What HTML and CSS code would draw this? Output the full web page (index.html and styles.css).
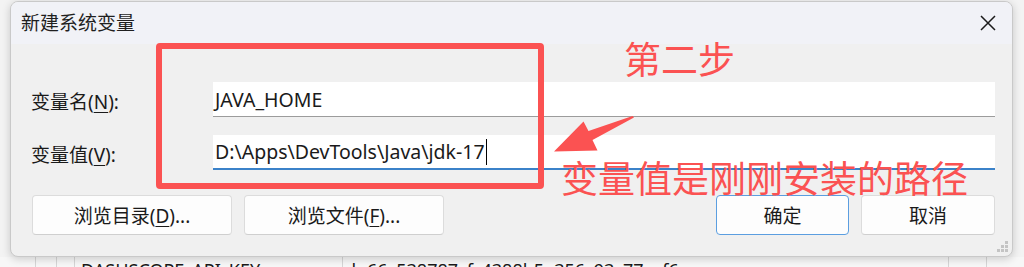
FILE: index.html
```html
<!DOCTYPE html>
<html lang="zh-CN">
<head>
  <meta charset="UTF-8" />
  <title>新建系统变量</title>
  <link rel="stylesheet" href="styles.css">
</head>
<body>

<!-- window behind the dialog -->
<div class="backdrop">
  <div class="bg-row">
    <span class="bg-cell first"></span>
    <span class="bg-cell narrow"></span>
    <span class="bg-cell narrow"></span>
    <span class="bg-cell name">DASHSCOPE_API_KEY</span>
    <span class="bg-cell value">sk-66c538787cfc4388b5e356c93c77acf6</span>
    <span class="bg-cell end"></span>
    <span class="bg-cell tail"></span>
  </div>
</div>

<div class="dialog">
  <div class="titlebar">
    <span class="title">新建系统变量</span>
    <svg class="close" width="16" height="16" viewBox="0 0 16 16">
      <path d="M1 1 L15 15 M15 1 L1 15" stroke="#1b1b1b" stroke-width="1.5" fill="none"/>
    </svg>
  </div>

  <div class="body">
    <div class="form">
      <label>变量名(<u>N</u>):</label>
      <div class="field">JAVA_HOME</div>
      <label>变量值(<u>V</u>):</label>
      <div class="field focused">D:\Apps\DevTools\Java\jdk-17<span class="caret"></span></div>
    </div>

    <div class="buttons">
      <div class="group">
        <button class="wide">浏览目录(<u>D</u>)...</button>
        <button class="wide">浏览文件(<u>F</u>)...</button>
      </div>
      <div class="group">
        <button class="default">确定</button>
        <button>取消</button>
      </div>
    </div>
  </div>

  <svg class="grip" width="12" height="12" viewBox="0 0 12 12">
    <rect x="8" y="0" width="3" height="3" fill="#c4c4c4"/>
    <rect x="4" y="4" width="3" height="3" fill="#c4c4c4"/>
    <rect x="8" y="4" width="3" height="3" fill="#c4c4c4"/>
    <rect x="0" y="8" width="3" height="3" fill="#c4c4c4"/>
    <rect x="4" y="8" width="3" height="3" fill="#c4c4c4"/>
    <rect x="8" y="8" width="3" height="3" fill="#c4c4c4"/>
  </svg>
</div>

<!-- red annotations drawn over the screenshot -->
<div class="mark-box"></div>
<div class="mark-text step">第二步</div>
<svg class="mark-arrow" width="90" height="45" viewBox="0 0 90 45">
  <polygon points="4,39.5 33.5,9.5 38.5,19 82.5,4 84,5.5 42.5,28 47.5,38.5" fill="#fb5252"/>
</svg>
<div class="mark-text note">变量值是刚刚安装的路径</div>

</body>
</html>
```

FILE: styles.css
```css
html, body {
  margin: 0;
  padding: 0;
}
body {
  width: 1024px;
  height: 267px;
  overflow: hidden;
  position: relative;
  background: #f3f3f3;
  font-family: "Noto Sans", "Noto Sans CJK SC", sans-serif;
  color: #1a1a1a;
}

/* background window */
.backdrop {
  height: 267px;
  padding-top: 257px;
  box-sizing: border-box;
  border-bottom: 2px solid #5a5a5a;
}
.bg-row {
  display: flex;
  height: 10px;
  overflow: hidden;
  background: #f7f7f7;
}
.bg-cell {
  border-right: 1px solid #d6d6d6;
  font-size: 18px;
  line-height: 22px;
  padding-top: 2px;
  white-space: nowrap;
}
.bg-cell.first { width: 35px; }
.bg-cell.narrow { width: 20px; }
.bg-cell.narrow:nth-child(3) { width: 17px; }
.bg-cell.name { width: 261px; padding-left: 6px; }
.bg-cell.value { width: 605px; }
.bg-cell.end { width: 37px; }
.bg-cell.tail { flex: 1; border-right: none; }

/* dialog */
.dialog {
  position: absolute;
  left: 10px;
  top: 1px;
  width: 1003px;
  height: 256px;
  box-sizing: border-box;
  border: 1px solid #c9c9c9;
  border-radius: 8px;
  background: #f0f0f0;
  box-shadow: 0 2px 8px rgba(0, 0, 0, 0.18);
  overflow: hidden;
}
.titlebar {
  height: 42px;
  background: #f1f2f7;
  display: flex;
  align-items: center;
  justify-content: space-between;
  padding: 0 16px 0 10px;
}
.title {
  font-size: 19px;
  color: #1f1f1f;
  margin-top: -2px;
}
.close {
  margin-bottom: 1px;
}

.body {
  padding: 38px 17px 0 20px;
}
.form {
  display: grid;
  grid-template-columns: 182px 1fr;
  row-gap: 18px;
  align-items: center;
}
.form label {
  font-size: 19px;
  padding-top: 2px;
}
.form u, .buttons u {
  text-decoration-thickness: 1px;
  text-underline-offset: 3px;
}
.field {
  height: 35px;
  box-sizing: border-box;
  background: #ffffff;
  border-bottom: 1px solid #9c9c9c;
  font-size: 19.5px;
  line-height: 33px;
  padding-left: 2px;
  display: flex;
  align-items: center;
}
.field.focused {
  border-bottom: 2px solid #3b82c9;
}
.caret {
  width: 1px;
  height: 26px;
  background: #000;
  margin-left: 1px;
}

.buttons {
  display: flex;
  justify-content: space-between;
  margin-top: 25px;
  padding-left: 1px;
}
.group {
  display: flex;
  gap: 12px;
}
button {
  width: 134px;
  height: 40px;
  background: #fdfdfd;
  border: 1px solid #dcdcdc;
  border-bottom-color: #cfcfcf;
  border-radius: 4px;
  font-family: "Noto Sans", "Noto Sans CJK SC", sans-serif;
  font-size: 19px;
  color: #1a1a1a;
  padding: 0;
}
button.wide {
  width: 200px;
}
button.default {
  width: 133px;
  border: 1px solid #5b9ee0;
}
.grip {
  position: absolute;
  right: 3px;
  bottom: 3px;
}

/* annotations */
.mark-box {
  position: absolute;
  left: 156px;
  top: 43px;
  width: 388px;
  height: 146px;
  box-sizing: border-box;
  border: 6px solid #fb5252;
  border-radius: 4px;
}
.mark-text {
  position: absolute;
  color: #fb5252;
  font-family: "Noto Sans CJK SC", sans-serif;
  font-size: 37px;
  line-height: 1;
  white-space: nowrap;
}
.mark-text.step {
  left: 624px;
  top: 40px;
}
.mark-text.note {
  left: 561px;
  top: 159px;
}
.mark-arrow {
  position: absolute;
  left: 550px;
  top: 112px;
}
```
